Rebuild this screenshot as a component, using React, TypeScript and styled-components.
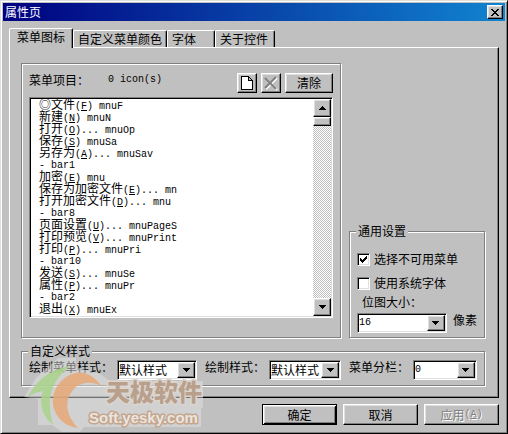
import React from "react";
import styled, { createGlobalStyle, css } from "styled-components";

const face = "#c0c0c0";
const shade = "#808080";
const light = "#dfdfdf";

const GlobalStyle = createGlobalStyle`
  * { box-sizing: border-box; }
  body { margin: 0; background: ${face}; }
  body, button, select, input {
    font: 12px/12px "Noto Sans CJK SC", sans-serif;
    color: #000;
  }
`;

const raised = css`
  border: 1px solid;
  border-color: #fff #000 #000 #fff;
  box-shadow: inset -1px -1px ${shade}, inset 1px 1px ${light};
`;
const sunken = css`
  border: 1px solid;
  border-color: ${shade} #fff #fff ${shade};
  box-shadow: inset 1px 1px #000, inset -1px -1px ${light};
`;
const etched = css`
  border: 1px solid ${shade};
  box-shadow: inset 1px 1px #fff, 1px 1px #fff;
`;

const Dialog = styled.main`
  position: relative;
  min-height: 100vh;
  padding: 2px;
  background: ${face};
  border: 1px solid;
  border-color: ${light} #000 #000 ${light};
  box-shadow: inset 1px 1px #fff, inset -1px -1px ${shade};
  display: flex;
  flex-direction: column;
`;
const TitleBar = styled.header`
  height: 18px;
  padding: 0 2px;
  display: flex;
  align-items: center;
  justify-content: space-between;
  background: linear-gradient(90deg, #000080, #1084d0);
`;
const Title = styled.h1`
  margin: 0;
  font-size: 12px;
  line-height: 16px;
  font-weight: 400;
  color: #fff;
`;
const Button = styled.button<{ $w: number; $h: number }>`
  ${raised}
  width: ${(p) => p.$w}px;
  height: ${(p) => p.$h}px;
  flex: none;
  padding: 0;
  background: ${face};
  display: flex;
  align-items: center;
  justify-content: center;
  &:disabled { color: ${shade}; text-shadow: 1px 1px #fff; }
`;
const DefaultButton = styled(Button)`
  border-color: #000;
  box-shadow: inset 1px 1px #fff, inset -1px -1px #000, inset 2px 2px ${light}, inset -2px -2px ${shade};
`;
const TabList = styled.div`
  display: flex;
  align-items: flex-end;
  height: 26px;
  margin: 0 6px;
  padding-top: 6px;
`;
const Tab = styled.button<{ $active?: boolean; $w: number }>`
  width: ${(p) => p.$w}px;
  height: ${(p) => (p.$active ? 20 : 17)}px;
  margin-bottom: ${(p) => (p.$active ? -1 : 0)}px;
  z-index: ${(p) => (p.$active ? 1 : 0)};
  padding: ${(p) => (p.$active ? "0 7px 3px" : "0 4px")};
  text-align: left;
  background: ${face};
  border: 1px solid;
  border-color: #fff #000 transparent #fff;
  border-bottom: 0;
  border-radius: 2px 2px 0 0;
  box-shadow: inset -1px 0 ${shade};
  white-space: nowrap;
`;
const TabPanel = styled.section`
  ${raised}
  box-shadow: inset -1px -1px ${shade};
  margin: 0 6px;
  padding: 15px 13px 11px 11px;
`;
const Upper = styled.div`
  display: flex;
  align-items: stretch;
  gap: 8px;
`;
const ItemsGroup = styled.div`
  ${etched}
  flex: 1;
  min-width: 0;
  padding: 9px 7px 19px;
`;
const ItemsHeader = styled.div`
  display: flex;
  gap: 4px;
  margin-bottom: 4px;
  height: 20px;
`;
const Count = styled.span`
  flex: 1;
  display: flex;
  padding-bottom: 6px;
  gap: 19px;
  align-items: center;
`;
const Latin = styled.span`
  font: 10px/12px "Liberation Mono", monospace;
  white-space: pre;
`;
const ListBox = styled.div`
  ${sunken}
  display: flex;
  background: #fff;
  padding: 1px;
`;
const Items = styled.ul`
  flex: 1;
  margin: 0;
  padding: 1px 0 0 8px;
  list-style: none;
`;
const Item = styled.li`
  height: 12px;
  display: flex;
  align-items: baseline;
  font-family: "Liberation Mono", "Noto Sans CJK SC", monospace;
  white-space: pre;
`;
const ScrollBar = styled.div`
  width: 18px;
  display: flex;
  flex-direction: column;
  background: repeating-conic-gradient(#fff 0 25%, ${face} 0 50%) 0 0 / 2px 2px;
`;
const Thumb = styled.div`
  ${raised}
  height: 9px;
  margin-bottom: auto;
  background: ${face};
`;
const Side = styled.div`
  width: 136px;
  display: flex;
  flex-direction: column;
  justify-content: flex-end;
`;
const Group = styled.fieldset`
  ${etched}
  position: relative;
  margin: 0;
  min-width: 0;
`;
const GroupTitle = styled.legend`
  position: absolute;
  top: -8px;
  left: 6px;
  padding: 0 2px;
  line-height: 14px;
  background: ${face};
`;
const GeneralGroup = styled(Group)`
  height: 107px;
  padding: 20px 7px 4px;
  display: flex;
  flex-direction: column;
`;
const CheckRow = styled.label`
  display: flex;
  align-items: center;
  gap: 4px;
  height: 14px;
  margin-bottom: 10px;
`;
const CheckBox = styled.input`
  ${sunken}
  appearance: none;
  width: 13px;
  height: 13px;
  margin: 0;
  background: #fff;
  &:checked {
    background: #fff url("data:image/svg+xml,%3Csvg xmlns='http://www.w3.org/2000/svg' viewBox='0 0 11 11' shape-rendering='crispEdges'%3E%3Cpath d='M2 4h1v1h1v1h1v-1h1v-1h1v-1h1v-1h1v3h-1v1h-1v1h-1v1h-1v1h-1v-1h-1v-1h-1z'/%3E%3C/svg%3E") center / 11px 11px no-repeat;
  }
`;
const SizeLabel = styled.label`
  padding-left: 5px;
  line-height: 12px;
  margin: -4px 0 5px;
`;
const SizeRow = styled.div`
  display: flex;
  gap: 6px;
  line-height: 14px;
`;
const StyleGroup = styled(Group)`
  margin-top: 13px;
  height: 35px;
  padding: 8px 7px 0;
  display: flex;
  justify-content: space-between;
`;
const Field = styled.div`
  display: flex;
  align-items: flex-start;
  gap: 4px;
`;
const FieldLabel = styled.label`
  line-height: 14px;
  white-space: nowrap;
`;
const Combo = styled.span<{ $w: number }>`
  ${sunken}
  width: ${(p) => p.$w}px;
  height: 20px;
  padding: 1px;
  display: grid;
  background: #fff;
`;
const Select = styled.select<{ $latin?: boolean }>`
  grid-area: 1 / 1;
  appearance: none;
  border: 0;
  margin: 0;
  padding: 0;
  width: 100%;
  height: 16px;
  line-height: 16px;
  background: none;
  outline: 0;
  ${(p) => p.$latin && css`
    font-family: "Liberation Mono", monospace;
    font-size: 10px;
  `}
`;
const ComboArrow = styled.span`
  ${raised}
  grid-area: 1 / 1;
  justify-self: end;
  width: 18px;
  height: 16px;
  background: ${face};
  display: grid;
  place-items: center;
  pointer-events: none;
`;
const Actions = styled.footer`
  display: flex;
  justify-content: flex-end;
  gap: 6px;
  padding: 6px;
`;
const Watermark = styled.svg`
  position: absolute;
  left: 17px;
  bottom: 0;
  width: 190px;
  height: 80px;
  pointer-events: none;
`;

const Arrow = ({ up }: { up?: boolean }) => (
  <svg width="7" height="4" shapeRendering="crispEdges" aria-hidden="true">
    <path d={up ? "M3 0h1v1h1v1h1v1h1v1H0V3h1V2h1V1h1z" : "M0 0h7v1H6v1H5v1H4v1H3V3H2V2H1V1H0z"} />
  </svg>
);

const items: [string, string, string][] = [
  ["◎文件", "F", " mnuF"],
  ["新建", "N", " mnuN"],
  ["打开", "O", "... mnuOp"],
  ["保存", "S", " mnuSa"],
  ["另存为", "A", "... mnuSav"],
  ["", "", "- bar1"],
  ["加密", "E", " mnu"],
  ["保存为加密文件", "E", "... mn"],
  ["打开加密文件", "D", "... mnu"],
  ["", "", "- bar8"],
  ["页面设置", "U", "... mnuPageS"],
  ["打印预览", "V", "... mnuPrint"],
  ["打印", "P", "... mnuPri"],
  ["", "", "- bar10"],
  ["发送", "S", "... mnuSe"],
  ["属性", "P", "... mnuPr"],
  ["", "", "- bar2"],
  ["退出", "X", " mnuEx"],
];

function ComboBox({ id, width, value, latin }: { id: string; width: number; value: string; latin?: boolean }) {
  return (
    <Combo $w={width}>
      <Select id={id} defaultValue={value} $latin={latin}>
        <option>{value}</option>
      </Select>
      <ComboArrow><Arrow /></ComboArrow>
    </Combo>
  );
}

export default function App() {
  return (
    <>
      <GlobalStyle />
      <Dialog>
        <TitleBar>
          <Title>属性页</Title>
          <Button $w={16} $h={14} aria-label="关闭">
            <svg width="8" height="7" shapeRendering="crispEdges">
              <path d="M0 0h2v1h1v1h2V1h1V0h2v1H7v1H6v1H5v1h1v1h1v1h1v1H6V6H5V5H3v1H2v1H0V6h1V5h1V4h1V3H2V2H1V1H0z" />
            </svg>
          </Button>
        </TitleBar>
        <TabList role="tablist">
          <Tab role="tab" aria-selected $active $w={64}>菜单图标</Tab>
          <Tab role="tab" $w={94}>自定义菜单颜色</Tab>
          <Tab role="tab" $w={48}>字体</Tab>
          <Tab role="tab" $w={60}>关于控件</Tab>
        </TabList>
        <TabPanel role="tabpanel">
          <Upper>
            <ItemsGroup>
              <ItemsHeader>
                <Count>
                  <span>菜单项目：</span>
                  <Latin>0 icon(s)</Latin>
                </Count>
                <Button $w={20} $h={20} aria-label="新建">
                  <svg width="12" height="14" shapeRendering="crispEdges">
                    <path d="M1 1h7v3h3v9H1z" fill="#fff" />
                    <path d="M0 0h8v1h1v1h1v1h1v1h1v10H0zM1 1v12h10V5H7V1zM8 2v2h2V3H9V2z" fillRule="evenodd" />
                  </svg>
                </Button>
                <Button $w={20} $h={20} disabled aria-label="删除">
                  <svg width="16" height="15" fill="none" strokeWidth="2">
                    <path d="M3 3l11 11M14 2L3 13" stroke="#fff" />
                    <path d="M2 2l11 11M13 1L2 12" stroke={shade} />
                  </svg>
                </Button>
                <Button $w={48} $h={20}>清除</Button>
              </ItemsHeader>
              <ListBox>
                <Items role="listbox" aria-label="菜单项目">
                  {items.map(([name, key, rest], i) => (
                    <Item key={i} role="option">
                      {name}
                      <Latin>{key && <>(<u>{key}</u>)</>}{rest}</Latin>
                    </Item>
                  ))}
                </Items>
                <ScrollBar>
                  <Button $w={18} $h={18} aria-label="向上"><Arrow up /></Button>
                  <Thumb />
                  <Button $w={18} $h={18} aria-label="向下"><Arrow /></Button>
                </ScrollBar>
              </ListBox>
            </ItemsGroup>
            <Side>
              <GeneralGroup>
                <GroupTitle>通用设置</GroupTitle>
                <CheckRow><CheckBox type="checkbox" defaultChecked />选择不可用菜单</CheckRow>
                <CheckRow><CheckBox type="checkbox" />使用系统字体</CheckRow>
                <SizeLabel htmlFor="size">位图大小：</SizeLabel>
                <SizeRow>
                  <ComboBox id="size" width={90} value="16" latin />
                  像素
                </SizeRow>
              </GeneralGroup>
            </Side>
          </Upper>
          <StyleGroup>
            <GroupTitle>自定义样式</GroupTitle>
            <Field>
              <FieldLabel htmlFor="menu-style">绘制菜单样式：</FieldLabel>
              <ComboBox id="menu-style" width={80} value="默认样式" />
            </Field>
            <Field>
              <FieldLabel htmlFor="draw-style">绘制样式：</FieldLabel>
              <ComboBox id="draw-style" width={72} value="默认样式" />
            </Field>
            <Field>
              <FieldLabel htmlFor="columns">菜单分栏：</FieldLabel>
              <ComboBox id="columns" width={64} value="0" latin />
            </Field>
          </StyleGroup>
        </TabPanel>
        <Actions>
          <DefaultButton $w={75} $h={21}>确定</DefaultButton>
          <Button $w={75} $h={21}>取消</Button>
          <Button $w={75} $h={21} disabled>应用<Latin>(<u>A</u>)</Latin></Button>
        </Actions>
        <Watermark viewBox="18 353 190 80" aria-hidden="true">
          <path d="M24 397L36 378L58 358H76V367L100 374L110 381H203V408H201V427H84L80 432H62L52 425H38V399Z" fill="#e2e2e2" opacity=".5" />
          <path d="M28 397C35 382 48 370 70 366C56 378 44 392 53 425C43 417 38 404 43 391C37 392 32 394 28 397Z" fill="#a9d48b" opacity=".85" />
          <path d="M103 387C94 381 84 382 77 386C64 397 64 413 78 428C60 426 49 409 54 393C59 378 75 369 87 374C94 376 98 382 103 387Z" fill="#e8a878" opacity=".85" />
          <g strokeWidth="3" paintOrder="stroke" strokeLinejoin="round" fontWeight="900">
            <text x="106" y="401" fontSize="24" fontFamily="Noto Sans CJK SC" fill="#b9a08c" stroke="#dcd6d0">天极软件</text>
            <text x="89" y="423" fontSize="15" fontFamily="Liberation Sans" fill="#ebe5df" stroke="#c4a68e">Soft.yesky.com</text>
          </g>
        </Watermark>
      </Dialog>
    </>
  );
}
